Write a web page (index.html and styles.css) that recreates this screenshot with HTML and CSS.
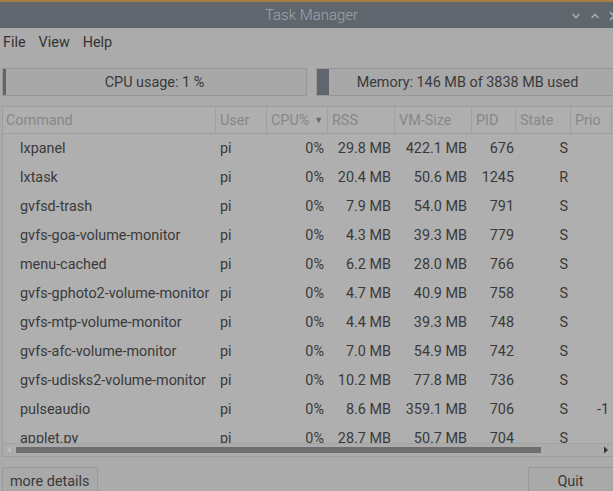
FILE: index.html
```html
<!DOCTYPE html>
<html>
<head>
<meta charset="utf-8">
<link rel="stylesheet" href="styles.css">
</head>
<body>
<div class="window">
  <div class="titlebar">
    <span class="title">Task Manager</span>
    <div class="wctl">
      <svg width="10" height="8" viewBox="0 0 10 8"><path d="M1.5 2 L5 5.5 L8.5 2" fill="none" stroke="#a7acb1" stroke-width="1.6"/></svg>
      <svg width="10" height="8" viewBox="0 0 10 8"><path d="M1.5 6 L5 2.5 L8.5 6" fill="none" stroke="#a7acb1" stroke-width="1.6"/></svg>
      <svg width="6" height="10" viewBox="0 0 6 10"><path d="M1 1 L6 6 M1 9 L6 4" fill="none" stroke="#a7acb1" stroke-width="1.6"/></svg>
    </div>
  </div>
  <div class="menubar">
    <span>File</span><span>View</span><span>Help</span>
  </div>
  <div class="bars">
    <div class="bar cpu"><div class="fill" style="width:1%"></div><span>CPU usage: 1 %</span></div>
    <div class="bar mem"><div class="fill" style="width:4%"></div><span>Memory: 146 MB of 3838 MB used</span></div>
  </div>
  <div class="tableframe">
    <div class="table">
      <div class="row head">
        <div class="c cmd">Command</div>
        <div class="c user">User</div>
        <div class="c cpu">CPU%<span class="arrow">▼</span></div>
        <div class="c rss">RSS</div>
        <div class="c vm">VM-Size</div>
        <div class="c pid">PID</div>
        <div class="c st">State</div>
        <div class="c pr">Prio</div>
      </div>
      <div class="body">
        <div class="row"><div class="c cmd">lxpanel</div><div class="c user">pi</div><div class="c cpu">0%</div><div class="c rss">29.8 MB</div><div class="c vm">422.1 MB</div><div class="c pid">676</div><div class="c st">S</div><div class="c pr"></div></div>
        <div class="row"><div class="c cmd">lxtask</div><div class="c user">pi</div><div class="c cpu">0%</div><div class="c rss">20.4 MB</div><div class="c vm">50.6 MB</div><div class="c pid">1245</div><div class="c st">R</div><div class="c pr"></div></div>
        <div class="row"><div class="c cmd">gvfsd-trash</div><div class="c user">pi</div><div class="c cpu">0%</div><div class="c rss">7.9 MB</div><div class="c vm">54.0 MB</div><div class="c pid">791</div><div class="c st">S</div><div class="c pr"></div></div>
        <div class="row"><div class="c cmd">gvfs-goa-volume-monitor</div><div class="c user">pi</div><div class="c cpu">0%</div><div class="c rss">4.3 MB</div><div class="c vm">39.3 MB</div><div class="c pid">779</div><div class="c st">S</div><div class="c pr"></div></div>
        <div class="row"><div class="c cmd">menu-cached</div><div class="c user">pi</div><div class="c cpu">0%</div><div class="c rss">6.2 MB</div><div class="c vm">28.0 MB</div><div class="c pid">766</div><div class="c st">S</div><div class="c pr"></div></div>
        <div class="row"><div class="c cmd">gvfs-gphoto2-volume-monitor</div><div class="c user">pi</div><div class="c cpu">0%</div><div class="c rss">4.7 MB</div><div class="c vm">40.9 MB</div><div class="c pid">758</div><div class="c st">S</div><div class="c pr"></div></div>
        <div class="row"><div class="c cmd">gvfs-mtp-volume-monitor</div><div class="c user">pi</div><div class="c cpu">0%</div><div class="c rss">4.4 MB</div><div class="c vm">39.3 MB</div><div class="c pid">748</div><div class="c st">S</div><div class="c pr"></div></div>
        <div class="row"><div class="c cmd">gvfs-afc-volume-monitor</div><div class="c user">pi</div><div class="c cpu">0%</div><div class="c rss">7.0 MB</div><div class="c vm">54.9 MB</div><div class="c pid">742</div><div class="c st">S</div><div class="c pr"></div></div>
        <div class="row"><div class="c cmd">gvfs-udisks2-volume-monitor</div><div class="c user">pi</div><div class="c cpu">0%</div><div class="c rss">10.2 MB</div><div class="c vm">77.8 MB</div><div class="c pid">736</div><div class="c st">S</div><div class="c pr"></div></div>
        <div class="row"><div class="c cmd">pulseaudio</div><div class="c user">pi</div><div class="c cpu">0%</div><div class="c rss">8.6 MB</div><div class="c vm">359.1 MB</div><div class="c pid">706</div><div class="c st">S</div><div class="c pr">-1</div></div>
        <div class="row"><div class="c cmd">applet.py</div><div class="c user">pi</div><div class="c cpu">0%</div><div class="c rss">28.7 MB</div><div class="c vm">50.7 MB</div><div class="c pid">704</div><div class="c st">S</div><div class="c pr"></div></div>
      </div>
    </div>
    <div class="hscroll">
      <svg class="sarrow" width="6" height="8" viewBox="0 0 6 8"><path d="M5 0.5 L1 4 L5 7.5 Z" fill="#bdbdbd"/></svg>
      <div class="track"><div class="thumb"></div></div>
      <svg class="sarrow" width="6" height="8" viewBox="0 0 6 8"><path d="M1 0.5 L5 4 L1 7.5 Z" fill="#333"/></svg>
    </div>
  </div>
  <div class="buttons">
    <div class="btn">more details</div>
    <div class="btn quit">Quit</div>
  </div>
</div>
</body>
</html>
```
FILE: styles.css
```css
html, body {
  margin: 0;
  padding: 0;
  width: 613px;
  height: 491px;
  overflow: hidden;
  background: #ababab;
  font-family: Roboto, "Noto Sans", sans-serif;
  font-size: 14.4px;
  color: #3a3a3a;
}
.window {
  display: flex;
  flex-direction: column;
  height: 491px;
  overflow: hidden;
  border-top: 2px solid #a67d43;
  box-sizing: border-box;
}
.window > * { flex-shrink: 0; }
.titlebar {
  height: 26px;
  background: #5f666e;
  display: flex;
  align-items: center;
  justify-content: center;
  position: relative;
}
.title {
  color: #a0a5ab;
  font-size: 15px;
  font-weight: 300;
  padding-left: 10px;
}
.wctl {
  position: absolute;
  right: -2px;
  top: 9px;
  display: flex;
  gap: 9px;
  align-items: center;
}
.menubar {
  height: 29px;
  display: flex;
  align-items: center;
  gap: 13px;
  padding-left: 3px;
  color: #333;
}
.bars {
  display: flex;
  gap: 9px;
  padding: 11px 0 0 2px;
  margin-right: -6px;
}
.bar {
  position: relative;
  height: 28px;
  box-sizing: border-box;
  border: 1px solid #979797;
  background: #a8a8a8;
  display: flex;
  align-items: center;
  justify-content: center;
  color: #3a3a3a;
}
.bar.cpu { width: 305px; }
.bar.mem { width: 303px; }
.bar .fill {
  position: absolute;
  left: 0;
  top: 0;
  bottom: 0;
  background: #5f666e;
}
.bar span { position: relative; }
.tableframe {
  margin: 10px 0 0 2px;
  border: 1px solid #9d9d9d;
  border-right: none;
  background: #afafaf;
  height: 351px;
  box-sizing: border-box;
  display: flex;
  flex-direction: column;
  overflow: hidden;
}
.table {
  flex: 1;
  overflow: hidden;
  width: 640px;
}
.row {
  display: grid;
  grid-template-columns: 213px 51px 61px 67px 77px 44px 55px 41px 40px;
  height: 29px;
  align-items: center;
}
.row.head {
  height: 26px;
  border-bottom: 1px solid #9e9e9e;
  color: #878787;
}
.row.head .c {
  border-right: 1px solid #a0a0a0;
  height: 26px;
  line-height: 28px;
  padding: 0 4px;
  text-align: left;
  box-sizing: border-box;
}
.row.head .c.cmd { padding-left: 3px; }
.body .row .c { box-sizing: border-box; padding: 0 4px; white-space: nowrap; }
.body .cmd { padding-left: 17px !important; }
.body .cpu, .body .rss, .body .vm, .body .pid { text-align: right; }
.body .rss { padding-right: 4px !important; }
.body .vm { padding-right: 5px !important; }
.body .pid { padding-right: 2px !important; }
.body .st { text-align: right; padding-right: 3px !important; }
.body .pr { text-align: right; padding-right: 3px !important; }
.arrow {
  font-size: 9px;
  margin-left: 5px;
  position: relative;
  top: -2px;
  color: #6a6a6a;
}
.hscroll {
  height: 11px;
  display: flex;
  align-items: center;
  gap: 2px;
  padding: 0 4px 1px 3px;
  background: #acacac;
  border-top: 1px solid #a2a2a2;
}
.track {
  flex: 1;
  height: 6px;
  position: relative;
}
.thumb {
  position: absolute;
  left: 2px;
  width: 525px;
  top: 0;
  bottom: 0;
  background: #6e6e6e;
}
.buttons {
  display: flex;
  justify-content: space-between;
  padding: 10px 0 0 2px;
  margin-right: -4px;
}
.btn {
  height: 30px;
  box-sizing: border-box;
  border: 1px solid #989898;
  border-radius: 2px;
  background: #a9a9a9;
  padding: 5px 8px 0 7px;
  color: #3a3a3a;
}
.btn.quit {
  width: 89px;
  text-align: center;
  padding-left: 0;
  padding-right: 4px;
}
```
